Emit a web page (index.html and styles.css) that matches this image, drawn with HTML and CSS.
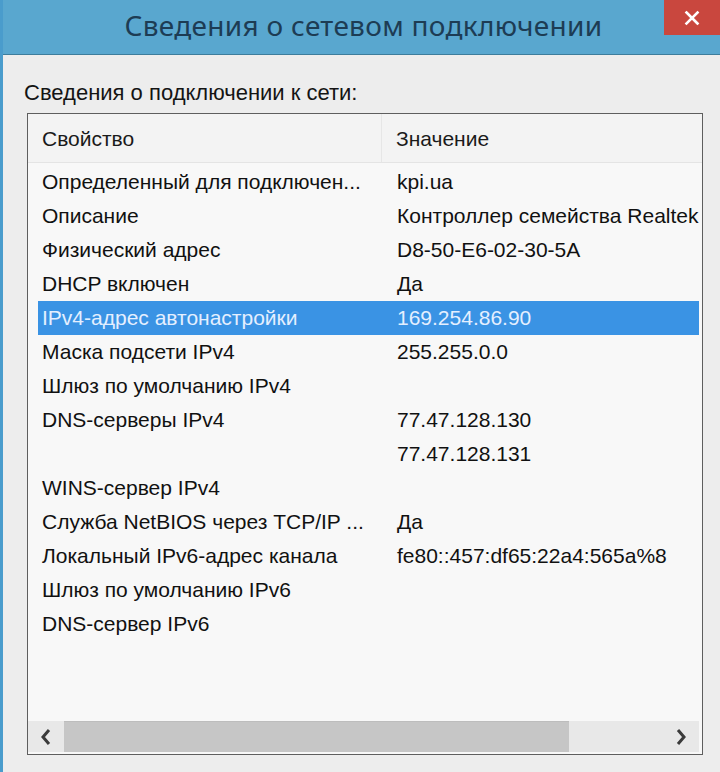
FILE: index.html
```html
<!DOCTYPE html>
<html lang="ru">
<head>
<meta charset="utf-8">
<title>Сведения о сетевом подключении</title>
<link rel="stylesheet" href="styles.css">
</head>
<body>
<div class="window">
  <div class="titlebar">
    <div class="title">Сведения о сетевом подключении</div>
    <div class="close" aria-label="Закрыть">
      <svg width="16" height="16" viewBox="0 0 16 16"><path d="M2.5 2.5 L13.5 13.5 M13.5 2.5 L2.5 13.5" stroke="#ffffff" stroke-width="2.6" stroke-linecap="square" fill="none"/></svg>
    </div>
  </div>
  <div class="content">
    <div class="label">Сведения о подключении к сети:</div>
    <div class="listbox">
      <div class="header">
        <div class="hcell hcell-1">Свойство</div>
        <div class="hcell hcell-2">Значение</div>
      </div>
      <div class="rows">
        <div class="row"><div class="c1">Определенный для подключен...</div><div class="c2">kpi.ua</div></div>
        <div class="row"><div class="c1">Описание</div><div class="c2">Контроллер семейства Realtek PCIe GBE</div></div>
        <div class="row"><div class="c1">Физический адрес</div><div class="c2">D8-50-E6-02-30-5A</div></div>
        <div class="row"><div class="c1">DHCP включен</div><div class="c2">Да</div></div>
        <div class="row selected"><div class="c1">IPv4-адрес автонастройки</div><div class="c2">169.254.86.90</div></div>
        <div class="row"><div class="c1">Маска подсети IPv4</div><div class="c2">255.255.0.0</div></div>
        <div class="row"><div class="c1">Шлюз по умолчанию IPv4</div><div class="c2"></div></div>
        <div class="row"><div class="c1">DNS-серверы IPv4</div><div class="c2">77.47.128.130</div></div>
        <div class="row"><div class="c1"></div><div class="c2">77.47.128.131</div></div>
        <div class="row"><div class="c1">WINS-сервер IPv4</div><div class="c2"></div></div>
        <div class="row"><div class="c1">Служба NetBIOS через TCP/IP ...</div><div class="c2">Да</div></div>
        <div class="row"><div class="c1">Локальный IPv6-адрес канала</div><div class="c2">fe80::457:df65:22a4:565a%8</div></div>
        <div class="row"><div class="c1">Шлюз по умолчанию IPv6</div><div class="c2"></div></div>
        <div class="row"><div class="c1">DNS-сервер IPv6</div><div class="c2"></div></div>
      </div>
      <div class="hscroll">
        <div class="sbtn">
          <svg width="14" height="18" viewBox="0 0 14 18"><path d="M10 2 L4 9 L10 16" stroke="#3a3a3a" stroke-width="3" fill="none"/></svg>
        </div>
        <div class="track"><div class="thumb"></div></div>
        <div class="sbtn">
          <svg width="14" height="18" viewBox="0 0 14 18"><path d="M4 2 L10 9 L4 16" stroke="#3a3a3a" stroke-width="3" fill="none"/></svg>
        </div>
      </div>
    </div>
  </div>
</div>
</body>
</html>
```
FILE: styles.css
```css
* { box-sizing: border-box; }
html, body {
  margin: 0;
  padding: 0;
  width: 720px;
  height: 772px;
  overflow: hidden;
  background: #ededed;
}
.window {
  width: 720px;
  height: 772px;
  border-left: 3px solid #4a9ccc;
  display: flex;
  flex-direction: column;
  background: #ededed;
}
.titlebar {
  position: relative;
  height: 55px;
  flex: none;
  background: #59a7cf;
  border-bottom: 1px solid #3d7d9c;
  display: flex;
  align-items: center;
  justify-content: center;
}
.title {
  font-family: "Noto Sans", "Open Sans", sans-serif;
  font-size: 28px;
  color: #1d3c54;
  margin-top: -4px;
  margin-left: 4px;
  letter-spacing: 0.3px;
}
.close {
  position: absolute;
  top: 0;
  right: 0;
  width: 56px;
  height: 35px;
  background: #c9473e;
  display: flex;
  align-items: center;
  justify-content: center;
}
.content {
  flex: 1;
  padding: 18px 14px 0 24px;
  display: flex;
  flex-direction: column;
}
.label {
  font-family: "Liberation Sans", Arial, sans-serif;
  font-size: 22px;
  color: #141414;
  letter-spacing: 0;
  margin-left: -3px;
  height: 40px;
  line-height: 40px;
}
.listbox {
  width: 676px;
  height: 642px;
  border: 1px solid #5e5e5e;
  background: #f8f8f8;
  display: flex;
  flex-direction: column;
}
.header {
  height: 49px;
  flex: none;
  display: flex;
  background: #f3f3f3;
  border-bottom: 1px solid #e4e4e4;
  font-family: "Liberation Sans", Arial, sans-serif;
  font-size: 21px;
  color: #1a1a1a;
}
.hcell {
  display: flex;
  align-items: center;
  padding-top: 2px;
}
.hcell-1 {
  width: 354px;
  padding-left: 14px;
  border-right: 1px solid #e6e6e6;
}
.hcell-2 {
  flex: 1;
  padding-left: 14px;
}
.rows {
  flex: 1;
  padding: 2px 3px 0 10px;
  font-family: "Liberation Sans", Arial, sans-serif;
  font-size: 21px;
  color: #111;
}
.row {
  display: grid;
  grid-template-columns: 344px 1fr;
  height: 34px;
  align-items: center;
}
.row .c1 {
  padding-left: 4px;
  white-space: nowrap;
  overflow: hidden;
}
.row .c2 {
  padding-left: 15px;
  white-space: nowrap;
  overflow: hidden;
}
.row.selected {
  background: #3a93e4;
  color: #e4efff;
}
.hscroll {
  flex: none;
  height: 31px;
  margin: 0 3px 2px 0;
  display: flex;
  background: #e8e8e8;
}
.sbtn {
  width: 36px;
  display: flex;
  align-items: center;
  justify-content: center;
}
.track {
  flex: 1;
  display: flex;
}
.thumb {
  width: 505px;
  background: #c6c6c6;
  border-top: 1px solid #bdbdbd;
}
```
